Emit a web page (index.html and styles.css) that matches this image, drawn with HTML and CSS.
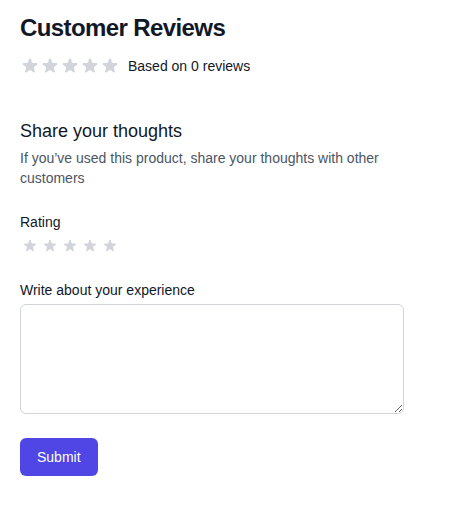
FILE: index.html
```html
<!DOCTYPE html>
<html lang="en">
<head>
<meta charset="utf-8">
<title>Customer Reviews</title>
<link rel="stylesheet" href="styles.css">
</head>
<body>
<div class="page">
  <section class="summary">
    <h2 class="title">Customer Reviews</h2>
    <div class="summary-row">
      <div class="stars">
        <svg class="star" viewBox="0 0 20 20"><path d="M9.049 2.927c.3-.921 1.603-.921 1.902 0l1.07 3.292a1 1 0 00.95.69h3.462c.969 0 1.371 1.24.588 1.81l-2.8 2.034a1 1 0 00-.364 1.118l1.07 3.292c.3.921-.755 1.688-1.54 1.118l-2.8-2.034a1 1 0 00-1.175 0l-2.8 2.034c-.784.57-1.838-.197-1.539-1.118l1.07-3.292a1 1 0 00-.364-1.118L2.98 8.72c-.783-.57-.38-1.81.588-1.81h3.461a1 1 0 00.951-.69l1.07-3.292z"/></svg>
        <svg class="star" viewBox="0 0 20 20"><path d="M9.049 2.927c.3-.921 1.603-.921 1.902 0l1.07 3.292a1 1 0 00.95.69h3.462c.969 0 1.371 1.24.588 1.81l-2.8 2.034a1 1 0 00-.364 1.118l1.07 3.292c.3.921-.755 1.688-1.54 1.118l-2.8-2.034a1 1 0 00-1.175 0l-2.8 2.034c-.784.57-1.838-.197-1.539-1.118l1.07-3.292a1 1 0 00-.364-1.118L2.98 8.72c-.783-.57-.38-1.81.588-1.81h3.461a1 1 0 00.951-.69l1.07-3.292z"/></svg>
        <svg class="star" viewBox="0 0 20 20"><path d="M9.049 2.927c.3-.921 1.603-.921 1.902 0l1.07 3.292a1 1 0 00.95.69h3.462c.969 0 1.371 1.24.588 1.81l-2.8 2.034a1 1 0 00-.364 1.118l1.07 3.292c.3.921-.755 1.688-1.54 1.118l-2.8-2.034a1 1 0 00-1.175 0l-2.8 2.034c-.784.57-1.838-.197-1.539-1.118l1.07-3.292a1 1 0 00-.364-1.118L2.98 8.72c-.783-.57-.38-1.81.588-1.81h3.461a1 1 0 00.951-.69l1.07-3.292z"/></svg>
        <svg class="star" viewBox="0 0 20 20"><path d="M9.049 2.927c.3-.921 1.603-.921 1.902 0l1.07 3.292a1 1 0 00.95.69h3.462c.969 0 1.371 1.24.588 1.81l-2.8 2.034a1 1 0 00-.364 1.118l1.07 3.292c.3.921-.755 1.688-1.54 1.118l-2.8-2.034a1 1 0 00-1.175 0l-2.8 2.034c-.784.57-1.838-.197-1.539-1.118l1.07-3.292a1 1 0 00-.364-1.118L2.98 8.72c-.783-.57-.38-1.81.588-1.81h3.461a1 1 0 00.951-.69l1.07-3.292z"/></svg>
        <svg class="star" viewBox="0 0 20 20"><path d="M9.049 2.927c.3-.921 1.603-.921 1.902 0l1.07 3.292a1 1 0 00.95.69h3.462c.969 0 1.371 1.24.588 1.81l-2.8 2.034a1 1 0 00-.364 1.118l1.07 3.292c.3.921-.755 1.688-1.54 1.118l-2.8-2.034a1 1 0 00-1.175 0l-2.8 2.034c-.784.57-1.838-.197-1.539-1.118l1.07-3.292a1 1 0 00-.364-1.118L2.98 8.72c-.783-.57-.38-1.81.588-1.81h3.461a1 1 0 00.951-.69l1.07-3.292z"/></svg>
      </div>
      <p class="count">Based on 0 reviews</p>
    </div>
  </section>

  <form class="form">
    <h3 class="form-title">Share your thoughts</h3>
    <p class="form-desc">If you’ve used this product, share your thoughts with other customers</p>

    <div class="field rating-field">
      <span class="label">Rating</span>
      <div class="rating">
        <button type="button" class="rate"><svg viewBox="0 0 20 20"><path d="M9.049 2.927c.3-.921 1.603-.921 1.902 0l1.07 3.292a1 1 0 00.95.69h3.462c.969 0 1.371 1.24.588 1.81l-2.8 2.034a1 1 0 00-.364 1.118l1.07 3.292c.3.921-.755 1.688-1.54 1.118l-2.8-2.034a1 1 0 00-1.175 0l-2.8 2.034c-.784.57-1.838-.197-1.539-1.118l1.07-3.292a1 1 0 00-.364-1.118L2.98 8.72c-.783-.57-.38-1.81.588-1.81h3.461a1 1 0 00.951-.69l1.07-3.292z"/></svg></button>
        <button type="button" class="rate"><svg viewBox="0 0 20 20"><path d="M9.049 2.927c.3-.921 1.603-.921 1.902 0l1.07 3.292a1 1 0 00.95.69h3.462c.969 0 1.371 1.24.588 1.81l-2.8 2.034a1 1 0 00-.364 1.118l1.07 3.292c.3.921-.755 1.688-1.54 1.118l-2.8-2.034a1 1 0 00-1.175 0l-2.8 2.034c-.784.57-1.838-.197-1.539-1.118l1.07-3.292a1 1 0 00-.364-1.118L2.98 8.72c-.783-.57-.38-1.81.588-1.81h3.461a1 1 0 00.951-.69l1.07-3.292z"/></svg></button>
        <button type="button" class="rate"><svg viewBox="0 0 20 20"><path d="M9.049 2.927c.3-.921 1.603-.921 1.902 0l1.07 3.292a1 1 0 00.95.69h3.462c.969 0 1.371 1.24.588 1.81l-2.8 2.034a1 1 0 00-.364 1.118l1.07 3.292c.3.921-.755 1.688-1.54 1.118l-2.8-2.034a1 1 0 00-1.175 0l-2.8 2.034c-.784.57-1.838-.197-1.539-1.118l1.07-3.292a1 1 0 00-.364-1.118L2.98 8.72c-.783-.57-.38-1.81.588-1.81h3.461a1 1 0 00.951-.69l1.07-3.292z"/></svg></button>
        <button type="button" class="rate"><svg viewBox="0 0 20 20"><path d="M9.049 2.927c.3-.921 1.603-.921 1.902 0l1.07 3.292a1 1 0 00.95.69h3.462c.969 0 1.371 1.24.588 1.81l-2.8 2.034a1 1 0 00-.364 1.118l1.07 3.292c.3.921-.755 1.688-1.54 1.118l-2.8-2.034a1 1 0 00-1.175 0l-2.8 2.034c-.784.57-1.838-.197-1.539-1.118l1.07-3.292a1 1 0 00-.364-1.118L2.98 8.72c-.783-.57-.38-1.81.588-1.81h3.461a1 1 0 00.951-.69l1.07-3.292z"/></svg></button>
        <button type="button" class="rate"><svg viewBox="0 0 20 20"><path d="M9.049 2.927c.3-.921 1.603-.921 1.902 0l1.07 3.292a1 1 0 00.95.69h3.462c.969 0 1.371 1.24.588 1.81l-2.8 2.034a1 1 0 00-.364 1.118l1.07 3.292c.3.921-.755 1.688-1.54 1.118l-2.8-2.034a1 1 0 00-1.175 0l-2.8 2.034c-.784.57-1.838-.197-1.539-1.118l1.07-3.292a1 1 0 00-.364-1.118L2.98 8.72c-.783-.57-.38-1.81.588-1.81h3.461a1 1 0 00.951-.69l1.07-3.292z"/></svg></button>
      </div>
    </div>

    <div class="field text-field">
      <label class="label" for="review">Write about your experience</label>
      <textarea id="review" class="textarea"></textarea>
    </div>

    <button type="submit" class="submit">Submit</button>
  </form>
</div>
</body>
</html>
```

FILE: styles.css
```css
* { box-sizing: border-box; }

html, body {
  margin: 0;
  padding: 0;
  background: #ffffff;
}

body {
  font-family: "Liberation Sans", Arial, sans-serif;
  color: #111827;
}

.page {
  padding: 12px 20px;
  width: 424px;
}

.title {
  margin: 0;
  font-size: 24px;
  line-height: 32px;
  font-weight: 700;
  letter-spacing: -0.6px;
  color: #111827;
}

.summary-row {
  display: flex;
  align-items: center;
  margin-top: 12px;
}

.stars {
  display: flex;
}

.star {
  width: 20px;
  height: 20px;
  fill: #d1d5db;
  display: block;
}

.count {
  margin: 0 0 0 8px;
  font-size: 14px;
  line-height: 20px;
  color: #111827;
}

.form {
  margin-top: 41px;
  width: 384px;
}

.form-title {
  margin: 0;
  font-size: 18px;
  line-height: 28px;
  font-weight: 500;
  color: #111827;
}

.form-desc {
  margin: 3px 0 0;
  font-size: 14px;
  line-height: 20px;
  color: #4b5563;
}

.field {
  display: flex;
  flex-direction: column;
}

.rating-field {
  margin-top: 24px;
}

.label {
  font-size: 14px;
  line-height: 20px;
  font-weight: 500;
  color: #111827;
}

.rating {
  display: flex;
  margin-top: 4px;
}

.rate {
  width: 20px;
  height: 20px;
  padding: 0;
  border: 0;
  background: none;
  display: flex;
  align-items: center;
  justify-content: center;
  cursor: pointer;
}

.rate svg {
  width: 16px;
  height: 16px;
  fill: #d1d5db;
  display: block;
}

.text-field {
  margin-top: 24px;
}

.textarea {
  margin-top: 4px;
  width: 384px;
  height: 110px;
  border: 1px solid #d1d5db;
  border-radius: 6px;
  padding: 8px 12px;
  font-family: "Liberation Sans", Arial, sans-serif;
  font-size: 14px;
  line-height: 20px;
  display: block;
}

.submit {
  margin-top: 24px;
  display: inline-block;
  padding: 8px 16px;
  border: 1px solid transparent;
  border-radius: 6px;
  background: #4f46e5;
  color: #ffffff;
  font-family: "Liberation Sans", Arial, sans-serif;
  font-size: 14px;
  line-height: 20px;
  font-weight: 500;
  cursor: pointer;
}
```
